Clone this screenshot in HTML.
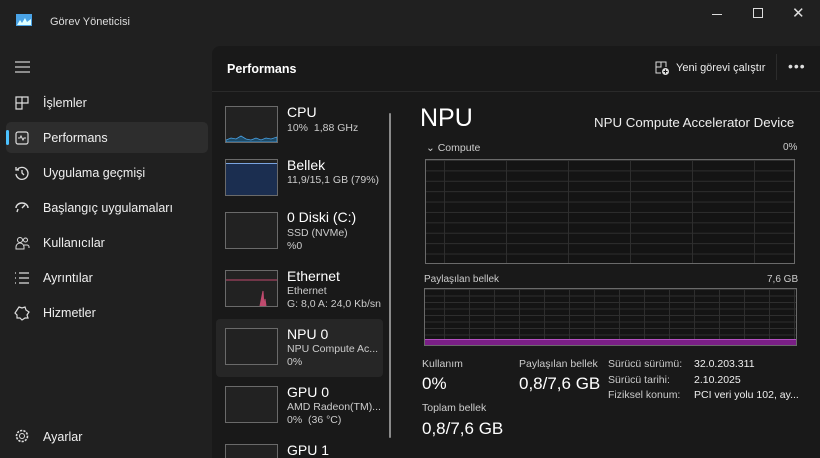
<!DOCTYPE html>
<html><head><meta charset="utf-8"><style>
*{margin:0;padding:0;box-sizing:border-box}
html,body{width:820px;height:458px;overflow:hidden}
body{background:#202020;font-family:"Liberation Sans",sans-serif;color:#fff;position:relative}
.a{position:absolute;white-space:nowrap}
.nav{position:absolute;left:43px;font-size:12.5px;color:#f0f0f0}
.ic{position:absolute;left:14px;width:16px;height:16px}
.panel{position:absolute;left:212px;top:46px;width:608px;height:412px;background:#191919;border-top-left-radius:8px;overflow:hidden}
.th{position:absolute;left:225px;width:53px;height:37px;border:1px solid #6a6a6a;background:#222}
.t1{position:absolute;left:287px;font-size:14px;color:#fff}
.t2{position:absolute;left:287px;font-size:10.5px;color:#ccc}
.grid{position:absolute;border:1px solid #6a6a6a;background-color:#141414;
background-image:linear-gradient(#2e2e2e 1px,transparent 1px),linear-gradient(90deg,#2e2e2e 1px,transparent 1px)}
.sm{font-size:10.5px;color:#ccc}
</style></head><body>
<svg class="a" style="left:16px;top:14px" width="16" height="12"><rect width="16" height="12" fill="#4aa3e6"/><path d="M1 11 L4 6 L6 9 L9 4 L11 8 L15 5 L15 11Z" fill="#dff"/></svg>
<div class="a" style="left:50px;top:16px;font-size:11px;color:#ddd">Görev Yöneticisi</div>
<div class="a" style="left:712px;top:14px;width:10px;height:1px;background:#ddd"></div>
<div class="a" style="left:753px;top:8px;width:10px;height:10px;border:1px solid #ddd"></div>
<div class="a" style="left:792px;top:4px;font-size:15px;color:#ddd">✕</div>

<svg class="a" style="left:15px;top:61px" width="15" height="12"><path d="M0 1H15M0 6H15M0 11H15" stroke="#ccc" stroke-width="1.2"/></svg>
<div class="a" style="left:6px;top:122px;width:202px;height:31px;background:#2d2d2d;border-radius:5px"></div>
<div class="a" style="left:6px;top:130px;width:3px;height:15px;background:#4cc2ff;border-radius:2px"></div>
<svg class="ic" style="top:95px" viewBox="0 0 16 16"><path d="M2 2h6v12H2zM8 2h6v6H8zM2 8h6" fill="none" stroke="#ddd" stroke-width="1.2"/></svg>
<div class="nav" style="top:96px">İşlemler</div>
<svg class="ic" style="top:130px" viewBox="0 0 16 16"><rect x="2" y="2" width="12" height="12" rx="2" fill="none" stroke="#ddd" stroke-width="1.2"/><path d="M4 8h2l1-2 2 4 1-2h2" fill="none" stroke="#ddd"/></svg>
<div class="nav" style="top:131px">Performans</div>
<svg class="ic" style="top:165px" viewBox="0 0 16 16"><path d="M3 5A6 6 0 1 1 2 9M2 2v3h3M8 5v3l2 2" fill="none" stroke="#ddd" stroke-width="1.3"/></svg>
<div class="nav" style="top:166px">Uygulama geçmişi</div>
<svg class="ic" style="top:200px" viewBox="0 0 16 16"><path d="M2 8A6 5 0 0 1 14 8M8 8l3-3M4 9l-1 3" fill="none" stroke="#ddd" stroke-width="1.4"/></svg>
<div class="nav" style="top:201px">Başlangıç uygulamaları</div>
<svg class="ic" style="top:235px" viewBox="0 0 16 16"><circle cx="6" cy="5" r="2.5" fill="none" stroke="#ddd"/><circle cx="11.5" cy="5" r="2" fill="none" stroke="#ddd"/><path d="M2 14v-2a3 3 0 0 1 8 0v2zM10 10h3a2 2 0 0 1 2 2v1" fill="none" stroke="#ddd"/></svg>
<div class="nav" style="top:236px">Kullanıcılar</div>
<svg class="ic" style="top:270px" viewBox="0 0 16 16"><path d="M1 3h1M1 8h1M1 13h1M5 3h10M5 8h10M5 13h10" stroke="#ddd" stroke-width="1.3"/></svg>
<div class="nav" style="top:271px">Ayrıntılar</div>
<svg class="ic" style="top:305px" viewBox="0 0 16 16"><path d="M5 2l3 1 3-1 1 3 3 2-2 3 1 3-3 0-3 2-2-2-3 0 0-3-2-2 2-3z" fill="none" stroke="#ddd" stroke-width="1.2"/></svg>
<div class="nav" style="top:306px">Hizmetler</div>
<svg class="ic" style="top:428px" viewBox="0 0 16 16"><circle cx="8" cy="8" r="2.5" fill="none" stroke="#ddd"/><circle cx="8" cy="8" r="5.5" fill="none" stroke="#ddd" stroke-dasharray="2.2 1.2" stroke-width="1.6"/></svg>
<div class="nav" style="top:430px">Ayarlar</div>

<div class="panel"></div>
<div class="a" style="left:212px;top:91px;width:608px;height:1px;background:#2a2a2a"></div>
<div class="a" style="left:227px;top:62px;font-size:12.5px;font-weight:bold">Performans</div>
<svg class="a" style="left:655px;top:61px" width="15" height="15" viewBox="0 0 15 15"><path d="M1 1h5v5H1zM6 1h5v5M1 6v6h5" fill="none" stroke="#ddd"/><circle cx="10.5" cy="10.5" r="3.5" fill="#ddd"/><path d="M10.5 8.5v4M8.5 10.5h4" stroke="#191919"/></svg>
<div class="a" style="left:676px;top:62px;font-size:11px;color:#eee">Yeni görevi çalıştır</div>
<div class="a" style="left:776px;top:54px;width:1px;height:26px;background:#2c2c2c"></div>
<div class="a" style="left:788px;top:58px;font-size:14px;color:#ddd;letter-spacing:1px">•••</div>

<div class="a" style="left:389px;top:113px;width:2px;height:325px;background:#8a8a8a;border-radius:1px"></div>
<div class="a" style="left:216px;top:319px;width:167px;height:58px;background:#262626;border-radius:4px"></div>

<div class="th" style="top:106px"><svg width="51" height="35"><path d="M0 33 L5 31 L10 32 L15 29 L20 32 L25 33 L30 31 L35 33 L40 31 L45 32 L51 30 L51 35 L0 35Z" fill="#1d4a66" stroke="#4aa3e6" stroke-width=".8"/></svg></div>
<div class="t1" style="top:104px">CPU</div><div class="t2" style="top:122px">10%&nbsp; 1,88 GHz</div>
<div class="th" style="top:159px;background:#1b2e50"><div style="height:4px;background:#222;border-bottom:1px solid #7aa4e0"></div></div>
<div class="t1" style="top:157px">Bellek</div><div class="t2" style="top:174px">11,9/15,1 GB (79%)</div>
<div class="th" style="top:212px"></div>
<div class="t1" style="top:209px">0 Diski (C:)</div><div class="t2" style="top:227px">SSD (NVMe)</div><div class="t2" style="top:240px">%0</div>
<div class="th" style="top:270px"><svg width="51" height="35"><path d="M0 9H51" stroke="#c04a6e"/><path d="M34 35L37 20L38 35L39 28L40 35" fill="#c04a6e" stroke="#c04a6e"/></svg></div>
<div class="t1" style="top:268px">Ethernet</div><div class="t2" style="top:285px">Ethernet</div><div class="t2" style="top:298px">G: 8,0 A: 24,0 Kb/sn</div>
<div class="th" style="top:328px"></div>
<div class="t1" style="top:326px">NPU 0</div><div class="t2" style="top:343px">NPU Compute Ac...</div><div class="t2" style="top:356px">0%</div>
<div class="th" style="top:386px"></div>
<div class="t1" style="top:384px">GPU 0</div><div class="t2" style="top:401px">AMD Radeon(TM)...</div><div class="t2" style="top:414px">0% &nbsp;(36 °C)</div>
<div class="th" style="top:444px;height:14px;border-bottom:none"></div>
<div class="t1" style="top:442px">GPU 1</div>

<div class="a" style="left:420px;top:104px;font-size:25px">NPU</div>
<div class="a" style="left:594px;top:115px;font-size:13.3px;color:#eee">NPU Compute Accelerator Device</div>
<div class="a sm" style="left:426px;top:142px">⌄ Compute</div>
<div class="a sm" style="left:783px;top:142px;font-size:10px">0%</div>
<div class="grid" style="left:425px;top:159px;width:370px;height:105px;background-size:62px 10.4px,62px 10px;background-position:-44px 0,-44px 0"></div>
<div class="a sm" style="left:424px;top:274px;font-size:10px">Paylaşılan bellek</div>
<div class="a sm" style="left:767px;top:274px;font-size:10px">7,6 GB</div>
<div class="grid" style="left:424px;top:288px;width:373px;height:58px;background-size:25px 6.5px,25px 6.5px;background-position:-6px 0,-6px 0"></div>
<div class="a" style="left:425px;top:339px;width:371px;height:6px;background:#7a1f86;border-top:1px solid #b24fbf"></div>

<div class="a sm" style="left:422px;top:358px">Kullanım</div>
<div class="a" style="left:422px;top:374px;font-size:17px">0%</div>
<div class="a sm" style="left:422px;top:402px">Toplam bellek</div>
<div class="a" style="left:422px;top:419px;font-size:17px">0,8/7,6 GB</div>
<div class="a sm" style="left:519px;top:358px">Paylaşılan bellek</div>
<div class="a" style="left:519px;top:374px;font-size:17px">0,8/7,6 GB</div>
<div class="a sm" style="left:608px;top:358px">Sürücü sürümü:</div>
<div class="a sm" style="left:608px;top:374px">Sürücü tarihi:</div>
<div class="a sm" style="left:608px;top:389px">Fiziksel konum:</div>
<div class="a" style="left:694px;top:358px;font-size:10.5px;color:#eee">32.0.203.311</div>
<div class="a" style="left:694px;top:374px;font-size:10.5px;color:#eee">2.10.2025</div>
<div class="a" style="left:694px;top:389px;font-size:10.5px;color:#eee">PCI veri yolu 102, ay...</div>
</body></html>
